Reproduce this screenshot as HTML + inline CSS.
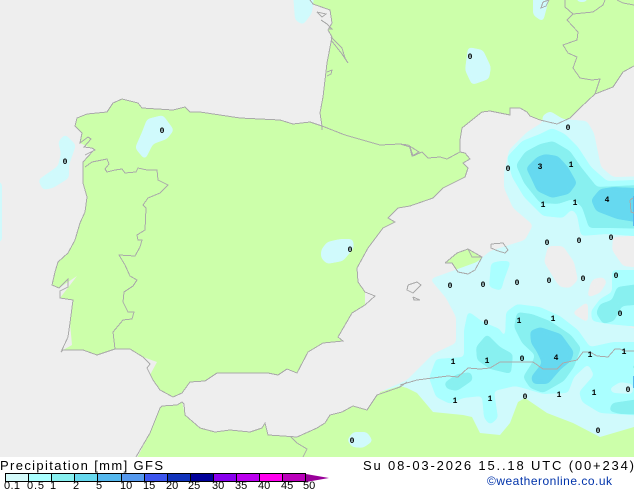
<!DOCTYPE html>
<html><head><meta charset="utf-8"><style>
html,body{margin:0;padding:0;background:#fff;width:634px;height:490px;overflow:hidden}
svg{display:block}
.a{fill:#d0fafc}.b{fill:#aaffff}.c{fill:#88f0f0}.d{fill:#66d9f0}.g{fill:#eeeeee}
.l{fill:none;stroke:#aaaaaa;stroke-width:1;shape-rendering:crispEdges}
.n{font:bold 8px "Liberation Mono",monospace;fill:#000;text-anchor:middle}
.t{font-family:"Liberation Sans",sans-serif;fill:#000}
</style></head><body>
<svg width="634" height="490" viewBox="0 0 634 490" xmlns="http://www.w3.org/2000/svg">
<defs>
<filter id="s" filterUnits="userSpaceOnUse" x="-60" y="-60" width="780" height="620" color-interpolation-filters="sRGB">
<feGaussianBlur stdDeviation="2.2"/>
<feComponentTransfer><feFuncA type="linear" slope="14" intercept="-6.5"/></feComponentTransfer>
</filter>
<clipPath id="m"><rect width="634" height="457"/></clipPath>
</defs>
<rect width="634" height="490" fill="#fff"/>
<rect width="634" height="457" fill="#eeeeee"/>
<g clip-path="url(#m)">
<polygon fill="#ccffaa" points="310,0 313,4 330,10 332,23 328,30 332,37 327,63 325,80 323,97 320,113 322,126 310,122 293,124 280,120 240,118 200,112 190,112 185,107 173,110 142,108 138,103 122,99 113,103 107,112 87,114 77,118 75,126 82,133 80,143 95,150 83,162 83,183 87,197 85,212 80,223 75,240 68,253 58,262 55,272 52,285 59,288 77,276 60,298 73,300 70,323 72,345 63,350 83,350 97,355 115,349 130,349 143,357 157,362 150,375 153,380 160,390 173,397 182,393 190,382 205,381 217,373 268,373 278,375 287,369 297,373 308,352 323,343 343,341 338,337 352,313 365,305 365,292 358,282 357,268 368,248 383,228 395,222 388,218 398,208 410,206 433,198 443,188 465,177 468,168 463,163 470,159 465,153 460,152 460,140 462,128 482,112 490,111 510,115 510,108 520,108 527,112 530,116 540,120 557,124 570,118 580,108 595,94 613,87 623,72 634,66 634,0"/>
<polygon fill="#ccffaa" points="445,263 457,253 468,249 482,257 475,270 468,274 458,272 452,263"/>
<polygon fill="#ccffaa" points="136,460 150,433 160,408 162,406 177,405 182,402 185,415 200,428 215,432 230,430 250,432 262,428 265,423 268,435 283,436 297,437 317,428 325,423 330,415 342,412 353,406 367,410 377,395 400,387 420,390 420,460"/>

<!-- lightest -->
<g filter="url(#s)">
<polygon class="a" points="292,-20 316,-20 312,13 303,25 295,20"/>
<polygon class="a" points="533,-20 554,-20 543,22 533,15"/>
<polygon class="a" points="575,-20 589,-20 587,2 577,2"/>
<polygon class="a" points="468,47 483,50 491,67 489,79 472,85 465,70"/>
<polygon class="a" points="58,142 65,134 76,145 69,165 69,178 53,188 43,190 38,180 58,166 61,153"/>
<polygon class="a" points="147,119 163,115 174,130 167,139 153,144 145,160 135,148 142,132"/>
<polygon class="a" points="321,250 327,242 340,239 353,239 354,248 343,261 327,264 321,258"/>
<rect class="a" x="-8" y="182" width="10" height="60"/>
<polygon class="a" points="543,122 542,116 550,111 563,119 587,121 594,133 601,167 613,177 660,176 660,480 380,480 380,392 407,380 433,354 456,343 456,317 446,298 430,279 477,262 490,251 525,240 533,225 513,208 504,188 504,173 509,150 527,132"/>
</g>
<!-- holes -->
<g filter="url(#s)">
<polygon class="g" points="548,246 563,246 574,262 578,280 570,288 560,287 555,280 544,262"/>
<polygon class="g" points="613,237 660,234 660,270 623,266 612,250"/>
<polygon class="g" points="593,279 603,277 607,282 600,293 587,298 590,285"/>
<polygon class="g" points="572,313 588,301 588,323"/>
<polygon class="g" points="629,316 660,315 660,328 629,328"/>
</g>
<!-- level 2 -->
<g filter="url(#s)">
<polygon class="b" points="552,128 565,134 578,147 591,167 607,181 660,179 660,238 607,234 581,236 577,215 572,209 563,218 543,216 524,197 512,177 507,157 522,141 540,134"/>
<polygon class="b" points="491,263 500,261 511,261 504,280 501,291 489,287"/>
<polygon class="b" points="468,311 483,322 500,329 505,340 506,312 517,304 540,307 560,316 578,330 590,347 613,342 660,342 660,417 600,413 582,402 579,392 594,375 588,364 574,377 568,393 543,394 523,388 515,386 494,391 498,418 490,425 484,418 482,396 463,398 450,404 436,397 429,378 436,359 464,357 464,330"/>
<polygon class="b" points="591,311 600,299 612,292 612,270 660,270 660,329 608,324 592,321"/>
</g>
<g filter="url(#s)"><polygon class="a" points="609,389 620,382 633,384 633,394 613,393"/></g>
<!-- level 3 -->
<g filter="url(#s)">
<polygon class="c" points="553,141 570,151 581,167 589,177 597,187 660,184 660,229 607,228 589,228 582,207 573,199 558,204 540,203 524,183 516,165 525,152 540,144"/>
<polygon class="c" points="517,312 532,314 550,321 571,335 581,348 574,367 564,381 543,393 530,388 523,377 532,363 535,355 522,343 514,327"/>
<polygon class="c" points="487,334 500,347 513,354 511,374 490,369 477,360 476,347"/>
<polygon class="c" points="444,383 457,374 471,372 473,380 457,391 447,389"/>
<polygon class="c" points="660,281 617,287 612,300 600,304 596,313 603,324 614,321 622,306 660,303"/>
<polygon class="c" points="609,411 612,403 660,396 660,415 620,414"/>
<polygon class="c" points="629,367 660,355 660,378"/>
</g>
<!-- level 4 -->
<g filter="url(#s)">
<polygon class="d" points="545,154 558,156 568,167 577,183 569,194 552,198 537,191 531,178 526,168 537,157"/>
<polygon class="d" points="600,189 613,187 660,189 660,226 617,219 596,211 591,200"/>
<polygon class="d" points="530,331 540,327 561,334 574,352 571,361 561,369 548,384 533,384 531,377 542,363 537,352 531,343"/>
</g>
<rect x="633" y="196" width="1" height="30" fill="#55b8ee"/>
<rect x="633" y="376" width="1" height="12" fill="#55b8ee"/>

<!-- Africa land over precip -->
<polygon fill="#ccffaa" points="400,386 407,388 417,393 433,412 463,415 472,417 480,433 500,435 510,423 518,402 525,398 547,413 573,423 600,437 634,427 634,460 380,460 380,392"/>
<g filter="url(#s)"><polygon class="a" points="347,440 353,432 367,432 373,441 363,448 352,447"/></g>

<!-- lines -->
<g class="l">
<polyline points="310,0 313,4 330,10 332,23 328,30 332,37 327,63 325,80 323,97 320,113 322,126 322,130"/>
<polyline points="317,12 326,14 322,17 317,12"/>
<polyline points="321,20 327,24 332,29 328,29"/>
<polyline points="331,37 342,48 345,58 348,63 342,54 331,40"/>
<polyline points="327,72 332,70 331,74 327,76"/>
<polyline points="322,126 345,135 380,145 400,144 410,147 413,156 422,152 428,158 440,157 447,159 460,152"/>
<polyline points="400,144 408,145 419,152 412,156 410,148"/>
<polyline points="322,126 310,122 293,124 280,120 240,118 200,112 190,112 185,107 173,110 142,108 138,103 122,99 113,103 107,112 87,114 77,118 75,126 82,133 80,143 88,137 91,139 84,147 92,148 95,150 85,155 93,151 83,162 83,183 87,197 85,212 80,223 75,240 68,253 58,262 55,272 52,285 59,288 68,279 68,287 60,291 60,298 73,300 70,323 68,337 61,352 63,350 83,350 97,355 115,349 130,349 143,357 150,364 147,368 153,380 160,390 173,397 182,393 190,382 205,381 217,373 268,373 278,375 287,369 297,373 308,352 323,343 343,341 338,337 352,313 365,305 375,296 365,292 358,282 357,268 368,248 383,228 395,222 388,218 398,208 410,206 433,198 443,188 465,177 468,168 463,163 470,159 465,153 460,152 460,140 462,128 482,112 490,111 510,115 510,108 520,108 527,112 530,116 540,120 557,124 570,118 580,108 595,94 613,87 623,72 634,66"/>
<polyline points="85,167 92,162 107,159 109,164 105,169 107,172 115,170 122,169 125,173 136,172 138,168 147,170 157,170 158,180 168,185 160,193 148,198 143,205 146,208 145,230 137,235 138,240 142,240 140,247 135,256 119,255 125,265 130,276 137,280 133,286 124,292 123,302 128,312 134,312 132,319 123,320 113,332 115,349"/>
<polyline points="565,0 565,7 573,14 567,20 578,32 577,40 563,45 568,53 577,57 573,68 580,78 592,80 600,79 595,94"/>
<polyline points="573,14 593,12 603,5 605,0"/>
<polyline points="617,0 623,3 634,5"/>
<polyline points="543,2 549,0 546,6 541,8 543,2"/>
<polyline points="445,263 457,253 468,249 482,257 475,270 468,274 458,272 452,263 445,263"/>
<polyline points="468,249 472,257 482,257"/>
<polyline points="491,244 503,243 508,250 505,253 498,251 491,248 491,244"/>
<polyline points="408,285 417,282 421,285 413,293 407,290 408,285"/>
<polyline points="413,297 420,300 414,300 413,297"/>
<polyline points="630,200 633,198"/>
<polyline points="630,200 631,212 634,213"/>
<polyline points="136,457 150,433 160,408 162,406 177,405 182,402 184,404 185,415 200,428 215,432 230,430 250,432 262,428 265,423 268,435 283,436 297,437 317,428 325,423 330,415 342,412 353,406 367,410 377,395 400,387 407,382"/>
<polyline points="291,437 297,443 307,449 303,457"/>
<polyline points="400,385 417,380 448,376 458,377 468,368 480,369 490,368 500,362 533,362 543,369 557,369 563,363 577,360 583,352 590,352 597,356 608,357 615,349 620,349 624,351 634,351"/>
</g>

<!-- numbers -->
<g class="n">
<text x="162" y="133">0</text><text x="65" y="164">0</text><text x="470" y="59">0</text><text x="568" y="130">0</text><text x="508" y="171">0</text><text x="350" y="252">0</text>
<text x="547" y="245">0</text><text x="579" y="243">0</text><text x="611" y="240">0</text><text x="549" y="283">0</text><text x="583" y="281">0</text><text x="616" y="278">0</text>
<text x="450" y="288">0</text><text x="483" y="287">0</text><text x="517" y="285">0</text><text x="486" y="325">0</text><text x="620" y="316">0</text><text x="522" y="361">0</text>
<text x="525" y="399">0</text><text x="598" y="433">0</text><text x="628" y="392">0</text><text x="352" y="443">0</text>
<text x="571" y="167">1</text><text x="543" y="207">1</text><text x="575" y="205">1</text><text x="519" y="323">1</text><text x="553" y="321">1</text><text x="453" y="364">1</text><text x="487" y="363">1</text>
<text x="590" y="357">1</text><text x="624" y="354">1</text><text x="455" y="403">1</text><text x="490" y="401">1</text><text x="559" y="397">1</text><text x="594" y="395">1</text>
<text x="540" y="169">3</text><text x="607" y="202">4</text><text x="556" y="360">4</text>
</g>
</g>

<!-- legend -->
<text class="t" x="0" y="470" font-size="13" textLength="163" lengthAdjust="spacing">Precipitation [mm] GFS</text>
<text class="t" x="363" y="470" font-size="13" textLength="271" lengthAdjust="spacing">Su 08-03-2026 15..18 UTC (00+234)</text>
<text class="t" x="487" y="485" font-size="12" textLength="125" lengthAdjust="spacing" style="fill:#0033aa">©weatheronline.co.uk</text>
<g shape-rendering="crispEdges" stroke="#000" stroke-width="1">
<rect x="5.5" y="473.5" width="23" height="8" fill="#d4fafa"/>
<rect x="28.5" y="473.5" width="23" height="8" fill="#aaffff"/>
<rect x="51.5" y="473.5" width="23" height="8" fill="#88f0f0"/>
<rect x="74.5" y="473.5" width="23" height="8" fill="#66d8ee"/>
<rect x="97.5" y="473.5" width="24" height="8" fill="#55b8ee"/>
<rect x="121.5" y="473.5" width="23" height="8" fill="#5599ee"/>
<rect x="144.5" y="473.5" width="23" height="8" fill="#3c55ee"/>
<rect x="167.5" y="473.5" width="23" height="8" fill="#1133bb"/>
<rect x="190.5" y="473.5" width="23" height="8" fill="#000099"/>
<rect x="213.5" y="473.5" width="23" height="8" fill="#8800ee"/>
<rect x="236.5" y="473.5" width="23" height="8" fill="#bb00ee"/>
<rect x="259.5" y="473.5" width="23" height="8" fill="#ff00ee"/>
<rect x="282.5" y="473.5" width="23" height="8" fill="#bb00bb"/>
</g>
<polygon points="306,474 329,478 306,482" fill="#990099"/>
<g class="t" font-size="11">
<text x="4" y="489" textLength="16" lengthAdjust="spacing">0.1</text>
<text x="27" y="489" textLength="17" lengthAdjust="spacing">0.5</text>
<text x="50" y="489">1</text><text x="73" y="489">2</text><text x="96" y="489">5</text>
<text x="120" y="489">10</text><text x="143" y="489">15</text><text x="166" y="489">20</text><text x="188" y="489">25</text>
<text x="212" y="489">30</text><text x="235" y="489">35</text><text x="258" y="489">40</text><text x="281" y="489">45</text><text x="303" y="489">50</text>
</g>
</svg>
</body></html>
